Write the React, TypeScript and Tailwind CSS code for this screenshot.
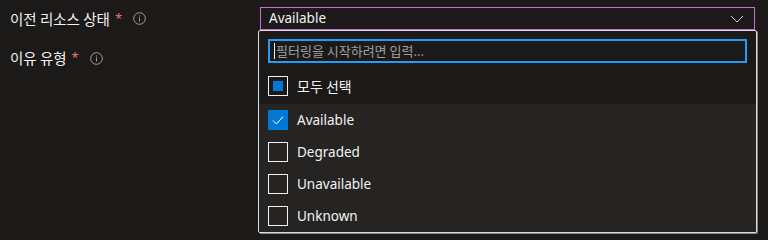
import React from "react";

const font = { fontFamily: '"Noto Sans", "Noto Sans CJK KR", sans-serif' };
const kr = { fontFamily: '"Noto Sans CJK KR", sans-serif' };

function Info() {
  return (
    <svg width="13" height="13" viewBox="0 0 13 13" className="shrink-0">
      <circle cx="6.5" cy="6.5" r="5.8" fill="none" stroke="#a19f9d" strokeWidth="1" />
      <rect x="6" y="5.5" width="1" height="4" fill="#a19f9d" />
      <rect x="6" y="3.5" width="1" height="1" fill="#a19f9d" />
    </svg>
  );
}

function Box({ checked }: { checked?: boolean }) {
  if (checked)
    return (
      <div className="w-5 h-5 bg-[#0078d4] flex items-center justify-center shrink-0">
        <svg width="14" height="14" viewBox="0 0 14 14">
          <path d="M2 7.5 L5.5 11 L12 3.5" fill="none" stroke="#ffffff" strokeWidth="1" />
        </svg>
      </div>
    );
  return <div className="w-5 h-5 border border-[#f3f2f1] shrink-0" />;
}

const items = ["Available", "Degraded", "Unavailable", "Unknown"];

export default function App() {
  return (
    <div className="w-[768px] h-[240px] bg-[#1b1a19] relative overflow-hidden text-[13.5px] text-[#f3f2f1]" style={font}>
      <div className="flex">
        <div className="w-[260px] pl-[10px] flex flex-col">
          <div className="h-[36px] flex items-center gap-[5px] pt-[1px]">
            <span className="text-[14.5px]" style={kr}>이전 리소스 상태</span>
            <span className="text-[#f1707b] text-[13px]">*</span>
            <span className="ml-[6px]"><Info /></span>
          </div>
          <div className="h-[44px] flex items-center gap-[5px]">
            <span className="text-[14.5px]" style={kr}>이유 유형</span>
            <span className="text-[#f1707b] text-[13px]">*</span>
            <span className="ml-[6px]"><Info /></span>
          </div>
        </div>
        <div className="pt-[7px]">
          <div className="w-[495px] h-[23px] border border-[#c86dd7] flex items-center justify-between pl-[8px] pr-[10px]">
            <span className="leading-none">Available</span>
            <svg width="14" height="8" viewBox="0 0 14 8">
              <path d="M1 1 L7 7 L13 1" fill="none" stroke="#d2d0ce" strokeWidth="1" />
            </svg>
          </div>
        </div>
      </div>

      <div className="absolute left-[258px] top-[30px] w-[499px] h-[203px] bg-[#1b1a19] border border-[#dcdcdc] rounded-[2px] shadow-[1px_1px_0_#8a8886] flex flex-col overflow-hidden">
        <div className="pt-[8px] px-[9px]">
          <div className="h-[24px] border-2 border-[#2899f5] flex items-center pl-[4px]">
            <span className="w-px h-[16px] bg-[#f3f2f1]" />
            <span className="text-[#a19f9d] text-[13px] ml-[1px]" style={kr}>필터링을 시작하려면 입력...</span>
          </div>
        </div>
        <div className="h-[40px] mt-[5px] flex items-center px-[9px] gap-[9px]">
          <div className="w-5 h-5 border border-[#f3f2f1] flex items-center justify-center shrink-0">
            <div className="w-[10px] h-[10px] bg-[#0078d4]" />
          </div>
          <span className="text-[14px] font-normal" style={kr}>모두 선택</span>
        </div>
        <div className="flex-1 bg-[#252423] flex flex-col">
          {items.map((it, i) => (
            <div key={it} className="h-[32px] flex items-center px-[9px] gap-[9px]">
              <Box checked={i === 0} />
              <span>{it}</span>
            </div>
          ))}
        </div>
      </div>
    </div>
  );
}
